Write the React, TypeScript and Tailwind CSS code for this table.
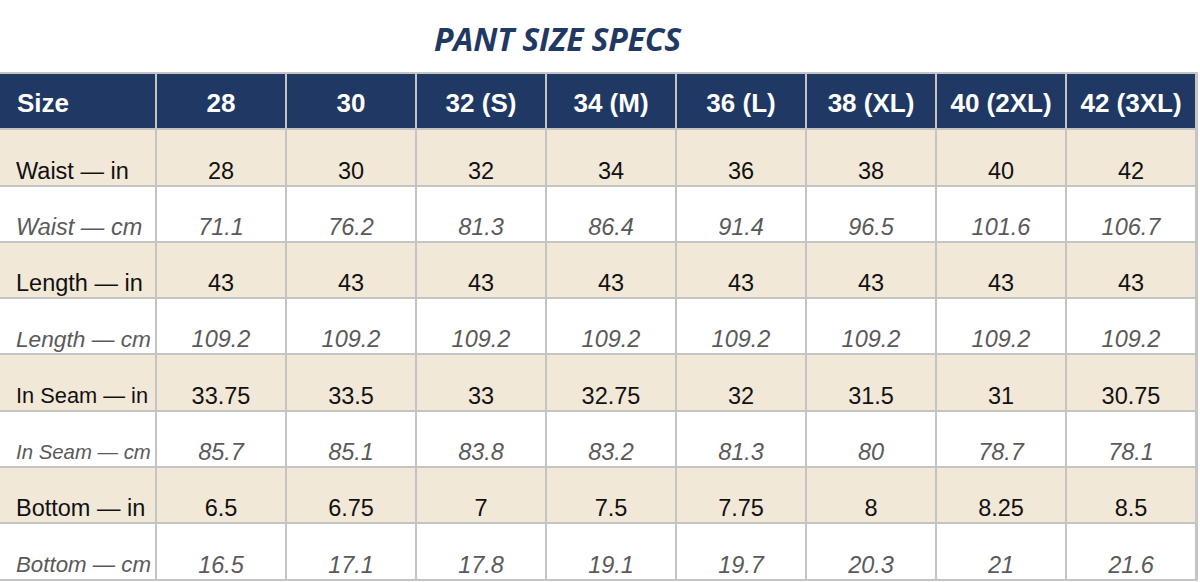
const sizes = ["28", "30", "32 (S)", "34 (M)", "36 (L)", "38 (XL)", "40 (2XL)", "42 (3XL)"];

type Row = { label: string; values: string[]; metric: boolean; labelSize: string };

// label sizes differ a little: the source sheet shrank long labels to fit the cell
const rows: Row[] = [
  { label: "Waist — in", values: ["28", "30", "32", "34", "36", "38", "40", "42"], metric: false, labelSize: "text-[23.5px]" },
  { label: "Waist — cm", values: ["71.1", "76.2", "81.3", "86.4", "91.4", "96.5", "101.6", "106.7"], metric: true, labelSize: "text-[23.5px]" },
  { label: "Length — in", values: ["43", "43", "43", "43", "43", "43", "43", "43"], metric: false, labelSize: "text-[23.5px]" },
  { label: "Length — cm", values: ["109.2", "109.2", "109.2", "109.2", "109.2", "109.2", "109.2", "109.2"], metric: true, labelSize: "text-[22.7px]" },
  { label: "In Seam — in", values: ["33.75", "33.5", "33", "32.75", "32", "31.5", "31", "30.75"], metric: false, labelSize: "text-[21.8px]" },
  { label: "In Seam — cm", values: ["85.7", "85.1", "83.8", "83.2", "81.3", "80", "78.7", "78.1"], metric: true, labelSize: "text-[20.4px]" },
  { label: "Bottom — in", values: ["6.5", "6.75", "7", "7.5", "7.75", "8", "8.25", "8.5"], metric: false, labelSize: "text-[23.5px]" },
  { label: "Bottom — cm", values: ["16.5", "17.1", "17.8", "19.1", "19.7", "20.3", "21", "21.6"], metric: true, labelSize: "text-[22.3px]" },
];

export default function App() {
  return (
    <div className="w-[1200px] h-[582px] bg-white overflow-hidden font-['Liberation_Sans',Arial,sans-serif]">
      <div className="h-[72px] pl-[434px] pt-[19px]">
        <h1 className="font-['Open_Sans',sans-serif] font-bold italic text-[#1f3864] text-[32px] leading-[40px] tracking-[-0.005em]">
          PANT SIZE SPECS
        </h1>
      </div>

      <div className="w-[1198px] grid grid-cols-[155px_repeat(8,128px)] auto-rows-[54.3px] gap-[2px] bg-[#c4c4c4] pt-[2px] pr-[2px] pb-[2px]">
        <div className="bg-[#1f3864] text-white font-bold text-[26px] flex items-center pl-[17px] pt-[4px]">
          Size
        </div>
        {sizes.map((s) => (
          <div
            key={s}
            className="bg-[#1f3864] text-white font-bold text-[26px] flex items-center justify-center pt-[4px]"
          >
            {s}
          </div>
        ))}

        {rows.map((r) => {
          const bg = r.metric ? "bg-white" : "bg-[#f2e8d8]";
          const txt = r.metric ? "italic text-[#5a5a5a]" : "text-[#111111]";
          return [
            <div
              key={r.label}
              className={`${bg} ${txt} ${r.labelSize} pl-[16px] flex items-end pb-[1px] leading-[26px] whitespace-nowrap overflow-hidden`}
            >
              {r.label}
            </div>,
            ...r.values.map((v, i) => (
              <div
                key={r.label + i}
                className={`${bg} ${txt} text-[23.5px] flex items-end justify-center pb-[1px] leading-[26px]`}
              >
                {v}
              </div>
            )),
          ];
        })}
      </div>
    </div>
  );
}
